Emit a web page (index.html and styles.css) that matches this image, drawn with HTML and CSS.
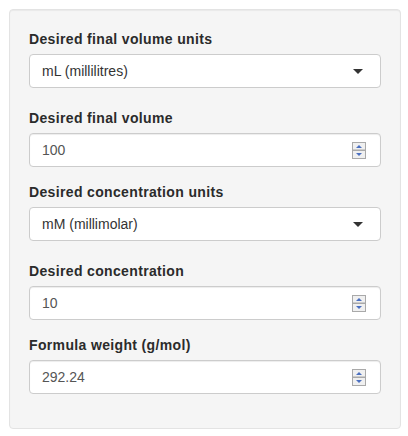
FILE: index.html
```html
<!DOCTYPE html>
<html>
<head>
<meta charset="utf-8">
<link rel="stylesheet" href="styles.css">
</head>
<body>
<form class="well">
  <div class="form-group select-group">
    <label class="control-label">Desired final volume units</label>
    <div class="select-box"><span class="select-text">mL (millilitres)</span><span class="caret"></span></div>
  </div>
  <div class="form-group">
    <label class="control-label">Desired final volume</label>
    <div class="num-wrap">
      <input class="form-control" type="number" value="100">
      <svg class="spin" width="14" height="17" viewBox="0 0 14 17"><rect x="0.5" y="0.5" width="13" height="7.5" fill="#f0f0f0" stroke="#a9a9a9"/><rect x="0.5" y="8.5" width="13" height="8" fill="#f0f0f0" stroke="#a9a9a9"/><path d="M4 6h6L7 3z" fill="#4a6fc0"/><path d="M4 11h6l-3 3z" fill="#4a6fc0"/></svg>
    </div>
  </div>
  <div class="form-group select-group">
    <label class="control-label">Desired concentration units</label>
    <div class="select-box"><span class="select-text">mM (millimolar)</span><span class="caret"></span></div>
  </div>
  <div class="form-group">
    <label class="control-label">Desired concentration</label>
    <div class="num-wrap">
      <input class="form-control" type="number" value="10">
      <svg class="spin" width="14" height="17" viewBox="0 0 14 17"><rect x="0.5" y="0.5" width="13" height="7.5" fill="#f0f0f0" stroke="#a9a9a9"/><rect x="0.5" y="8.5" width="13" height="8" fill="#f0f0f0" stroke="#a9a9a9"/><path d="M4 6h6L7 3z" fill="#4a6fc0"/><path d="M4 11h6l-3 3z" fill="#4a6fc0"/></svg>
    </div>
  </div>
  <div class="form-group">
    <label class="control-label">Formula weight (g/mol)</label>
    <div class="num-wrap">
      <input class="form-control" type="number" value="292.24">
      <svg class="spin" width="14" height="17" viewBox="0 0 14 17"><rect x="0.5" y="0.5" width="13" height="7.5" fill="#f0f0f0" stroke="#a9a9a9"/><rect x="0.5" y="8.5" width="13" height="8" fill="#f0f0f0" stroke="#a9a9a9"/><path d="M4 6h6L7 3z" fill="#4a6fc0"/><path d="M4 11h6l-3 3z" fill="#4a6fc0"/></svg>
    </div>
  </div>
</form>
</body>
</html>
```
FILE: styles.css
```css
* { box-sizing: border-box; }
html, body { margin: 0; padding: 0; background: #fff; }
body {
  font-family: "Liberation Sans", Arial, Helvetica, sans-serif;
  font-size: 14px;
  line-height: 20px;
  color: #333;
}
.well {
  margin: 9px 0 0 9px;
  width: 392px;
  height: 420px;
  padding: 19px;
  background: #f5f5f5;
  border: 1px solid #e3e3e3;
  border-radius: 4px;
  box-shadow: inset 0 1px 1px rgba(0,0,0,0.05);
}
.form-group { margin-bottom: 15px; display: flex; flex-direction: column; }
.select-group { margin-bottom: 20px; }
.control-label {
  display: block;
  font-weight: bold;
  letter-spacing: 0.35px;
  margin-bottom: 5px;
  height: 20px;
  color: #2b2b2b;
}
.select-box {
  position: relative;
  height: 34px;
  background: #fff;
  border: 1px solid #ccc;
  border-radius: 4px;
  padding: 6px 12px;
  color: #333;
}
.select-text { display: block; }
.caret {
  position: absolute;
  right: 17px;
  top: 14px;
  width: 0;
  height: 0;
  border-style: solid;
  border-width: 5px 5px 0 5px;
  border-color: #333 transparent transparent transparent;
}
.num-wrap { position: relative; height: 34px; }
.form-control {
  display: block;
  width: 100%;
  height: 34px;
  padding: 6px 12px;
  font-family: inherit;
  font-size: 14px;
  line-height: 20px;
  color: #555;
  background: #fff;
  border: 1px solid #ccc;
  border-radius: 4px;
  box-shadow: inset 0 1px 1px rgba(0,0,0,0.075);
  outline: none;
  -moz-appearance: textfield;
}
.form-control::-webkit-inner-spin-button,
.form-control::-webkit-outer-spin-button { -webkit-appearance: none; margin: 0; }
.spin {
  position: absolute;
  left: 323px;
  top: 9px;
  display: block;
}
```
